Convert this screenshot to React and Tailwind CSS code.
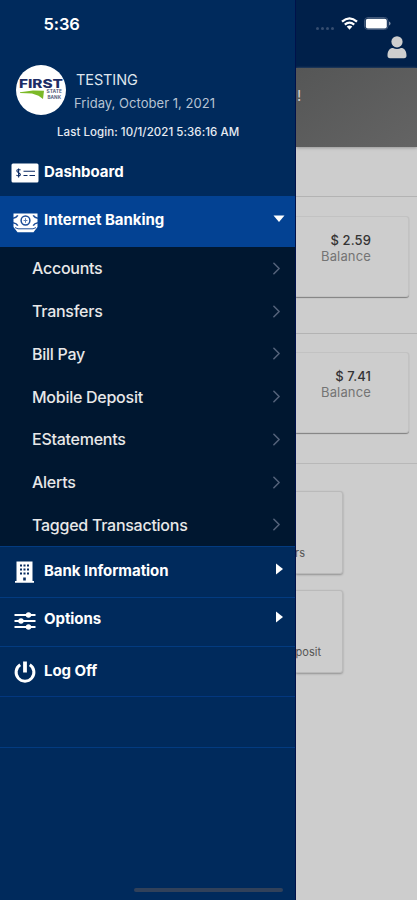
import { useState } from 'react'
import { ChevronRight } from 'lucide-react'

const subItems = [
  'Accounts',
  'Transfers',
  'Bill Pay',
  'Mobile Deposit',
  'EStatements',
  'Alerts',
  'Tagged Transactions'
]

function CheckIcon() {
  return (
    <svg width="28" height="20" viewBox="0 0 28 20" fill="none">
      <rect x="0.5" y="0.5" width="27" height="19" rx="1.5" fill="#fff" />
      <path d="M9.5 7.2C8.5 6 5.6 6.4 5.8 8C6 9.8 9.6 9.6 9.4 11.6C9.2 13.4 6.3 13.2 5.4 12M7.6 5.4V14.4" stroke="#0b2a63" strokeWidth="1.1" />
      <path d="M12.5 8.2H24M12.5 12.5H16.5M18.5 12.5H24" stroke="#0b2a63" strokeWidth="1.1" />
    </svg>
  )
}

function MoneyIcon() {
  return (
    <svg width="25" height="20" viewBox="0 0 25 20" fill="none">
      <path d="M0.5 0.5H24.5V14L20.5 19.3H4.5L0.5 14Z" fill="#fff" />
      <path d="M0 5.2Q3.6 4.6 4.8 2.4M25 5.2Q21.4 4.6 20.2 2.4M0 9.8Q3.6 10.4 4.8 12.6M25 9.8Q21.4 10.4 20.2 12.6" stroke="#1c4d98" strokeWidth="1.6" />
      <path d="M2 14.6L5 15.8H20L23 14.6" stroke="#1c4d98" strokeWidth="1" />
      <circle cx="12.5" cy="7.5" r="4.4" stroke="#1c4d98" strokeWidth="1.5" />
      <path d="M12.5 5.2V9.8M10.6 7.5H14.4" stroke="#5c80b5" strokeWidth="1" />
    </svg>
  )
}

function BuildingIcon() {
  return (
    <svg width="20" height="22" viewBox="0 0 20 22" fill="#fff">
      <path d="M1.5 0.5H17.5V20H19V21.7H0V20H1.5Z" />
      <path d="M5 3.5h2v2H5zM8.5 3.5h2v2h-2zM12 3.5h2v2h-2zM5 7.5h2v2H5zM8.5 7.5h2v2h-2zM12 7.5h2v2h-2zM5 11.5h2v2H5zM8.5 11.5h2v2h-2zM12 11.5h2v2h-2zM8.2 16.5h2.6v3H8.2z" fill="#072b60" />
    </svg>
  )
}

function SlidersIcon() {
  return (
    <svg width="22" height="18" viewBox="0 0 22 18" fill="#fff">
      <path d="M0.5 2H21.5V4H0.5ZM0.5 8H21.5V10H0.5ZM0.5 14H21.5V16H0.5Z" />
      <circle cx="14.5" cy="3" r="2.7" />
      <circle cx="7" cy="9" r="2.7" />
      <circle cx="14.5" cy="15" r="2.7" />
    </svg>
  )
}

function PowerIcon() {
  return (
    <svg width="22" height="22" viewBox="0 0 22 22" fill="none" stroke="#fff" strokeWidth="3">
      <path d="M6.2 3.8A8.9 8.9 0 1 0 15.8 3.8" />
      <path d="M11 0.5V11.5" strokeWidth="3.8" />
    </svg>
  )
}

function Logo() {
  return (
    <svg width="50" height="50" viewBox="0 0 50 50" className="shrink-0">
      <circle cx="25" cy="25" r="25" fill="#fff" />
      <text x="3" y="23" fontFamily="Inter, sans-serif" fontSize="11.5" fontWeight="800" fill="#1d2d66" textLength="44" lengthAdjust="spacingAndGlyphs">FIRST</text>
      <path d="M4 27.2L17 25.6L28 25.8L27 34L22.5 30.8L16 28.6L4 28Z" fill="#7cb928" />
      <g fontFamily="Inter, sans-serif" fontSize="4.6" fontWeight="700" fill="#59627e">
        <text x="30.5" y="28.3" textLength="15.5" lengthAdjust="spacingAndGlyphs">STATE</text>
        <text x="31.5" y="34.2" textLength="13.5" lengthAdjust="spacingAndGlyphs">BANK</text>
      </g>
    </svg>
  )
}

function Caret({ open }) {
  return (
    <svg width="12" height="12" viewBox="0 0 12 12" fill="#fff">
      <path d={open ? 'M0.5 2.5H11.5L6 9Z' : 'M3 0.5V11.5L10 6Z'} />
    </svg>
  )
}

function BalanceCard({ amount }) {
  return (
    <div className="h-[81px] w-[113px] rounded-r-[3px] border border-l-0 border-[#c2c2c2] bg-[#cdcdcd] pt-[15px] pr-[37px] text-right shadow-[0_1px_1px_#808080]">
      <div className="text-[13px] leading-4 font-medium tracking-[0.1px] text-[#343434]">$ {amount}</div>
      <div className="text-[13px] leading-4 tracking-[0.15px] text-[#747474]">Balance</div>
    </div>
  )
}

function Tile({ label, pad }) {
  return (
    <div className={`h-[83px] w-[47px] rounded-r-[3px] border border-l-0 border-[#bababa] bg-[#cdcdcd] shadow-[0_1px_2px_#929292] ${pad}`}>
      <div className="flex h-full items-end justify-end pb-[12px] text-[11px] leading-4 whitespace-nowrap text-[#555]">{label}</div>
    </div>
  )
}

export default function App() {
  const [open, setOpen] = useState(true)

  return (
    <div className="flex h-[900px] w-[417px] overflow-hidden bg-[#cdcdcd] font-['Inter',sans-serif]">
      {/* Drawer */}
      <aside className="flex h-full w-[296px] shrink-0 flex-col border-r border-[#00114a] bg-[#002a5c] text-white">
        <div className="h-[65px] pt-[14px] pl-[43.5px] text-[16.5px] leading-5 font-semibold tracking-[-0.1px]">5:36</div>

        <div className="flex h-[50px] pl-4">
          <Logo />
          <div className="pt-[5px]">
            <div className="pl-[10px] text-[14.5px] leading-5 tracking-[-0.1px] text-[#dfe5ed]">TESTING</div>
            <div className="mt-[5px] pl-[8px] text-[13px] leading-4 tracking-[0.04px] text-[#b7c3d3]">Friday, October 1, 2021</div>
          </div>
        </div>
        <div className="h-[33px] pt-[8.5px] pl-[57px] text-[11.5px] leading-4 font-medium tracking-[0.06px] text-[#e6ebf2]">Last Login: 10/1/2021 5:36:16 AM</div>

        <nav className="flex flex-col text-[15px] font-bold tracking-[-0.05px]">
          <a className="flex h-[48px] items-center">
            <span className="flex w-[44px] justify-center pt-[2px] pl-[6px]"><CheckIcon /></span>
            <span className="pt-px">Dashboard</span>
          </a>
          <button onClick={() => setOpen(!open)} className="flex h-[51px] items-center bg-[#034293] pr-[10px] text-left">
            <span className="flex w-[44px] justify-center pt-[3px] pl-[6px]"><MoneyIcon /></span>
            <span className="flex-1 pb-[3px]">Internet Banking</span>
            <span className="pb-[6px]"><Caret open={open} /></span>
          </button>

          {open && (
            <ul className="h-[299px] bg-[#001730] text-[16px] font-[450] tracking-[-0.26px] text-[#e8e8e8]">
              {subItems.map((item) => (
                <li key={item} className="flex h-[42.75px] items-center justify-between pr-[8px] pl-8">
                  {item}
                  <ChevronRight size={21} strokeWidth={1.8} className="text-[#53627a]" />
                </li>
              ))}
            </ul>
          )}

          <a className="flex h-[52px] items-center border-y border-[#033b80] pr-[10px] pb-px">
            <span className="flex w-[44px] justify-center pl-[6px]"><BuildingIcon /></span>
            <span className="flex-1">Bank Information</span>
            <span className="pb-[5px]"><Caret /></span>
          </a>
          <a className="flex h-[49px] items-center border-b border-[#033b80] pr-[10px] pb-[5px]">
            <span className="flex w-[44px] justify-center pt-[3px] pl-[6px]"><SlidersIcon /></span>
            <span className="flex-1">Options</span>
            <span className="pb-[5px]"><Caret /></span>
          </a>
          <a className="flex h-[50px] items-center border-b border-[#03377f]">
            <span className="flex w-[44px] justify-center pl-[6px]"><PowerIcon /></span>
            Log Off
          </a>
          <div className="h-[51px] border-b border-[#033b80]" />
        </nav>

        <div className="mt-auto mb-[8px] ml-[134px] h-[4px] w-[149px] rounded-full bg-[#31415a]" />
      </aside>

      {/* Page behind the drawer */}
      <main className="w-[121px] shrink-0 overflow-hidden">
        <header className="h-[68px] bg-[#00204a]">
          <div className="flex h-[36px] items-start pt-[17px] pl-5">
            <div className="flex gap-[2px] pt-[10px] pr-[7px]">
              <i className="size-[3px] rounded-full bg-[#354d70]" />
              <i className="size-[3px] rounded-full bg-[#354d70]" />
              <i className="size-[3px] rounded-full bg-[#354d70]" />
              <i className="size-[3px] rounded-full bg-[#354d70]" />
            </div>
            <svg width="17" height="13" viewBox="0 0 17 13" fill="none" stroke="#fff" strokeWidth="2.3">
              <path d="M1 4.6Q8.5-1.8 16 4.6M3.8 7.6Q8.5 3.6 13.2 7.6" />
              <path d="M5.7 9.6Q8.5 7.4 11.3 9.6L8.5 12.8Z" fill="#fff" stroke="none" />
            </svg>
            <svg width="27" height="13" viewBox="0 0 27 13" className="ml-[6px]">
              <rect x="0.5" y="0.5" width="23.5" height="12" rx="3.5" fill="none" stroke="#41587a" />
              <rect x="1.8" y="1.8" width="21" height="9.6" rx="2" fill="#fff" />
              <path d="M25 4.5Q26.5 5 26.5 6.5T25 8.5Z" fill="#8493aa" />
            </svg>
          </div>
          <svg width="20" height="23" viewBox="0 0 20 23" fill="#cecece" className="ml-[91px]">
            <circle cx="10" cy="5.8" r="5.6" />
            <path d="M0.5 19.5C0.5 14.5 2.8 12 6 12Q10 14 14 12C17.2 12 19.5 14.5 19.5 19.5Q19.5 22.2 17 22.2H3Q0.5 22.2 0.5 19.5Z" />
          </svg>
        </header>
        <div className="h-[79px] bg-gradient-to-br from-[#555656] to-[#646464] pt-[20px] pl-[1px] text-[15px] leading-4 text-[#d0d0d0] shadow-[0_1px_3px_#999]">!</div>
        <div className="h-[50px] border-b border-[#b3b3b3]" />
        <div className="pt-[19px]"><BalanceCard amount="2.59" /></div>
        <div className="h-[37px] border-b border-[#b3b3b3]" />
        <div className="pt-[18px]"><BalanceCard amount="7.41" /></div>
        <div className="h-[31px] border-b border-[#b8b8b8]" />
        <div className="flex flex-col gap-[16px] pt-[27px]">
          <Tile label="Transfers" pad="pr-[37px]" />
          <Tile label="Mobile Deposit" pad="pr-[21px]" />
        </div>
      </main>
    </div>
  )
}
